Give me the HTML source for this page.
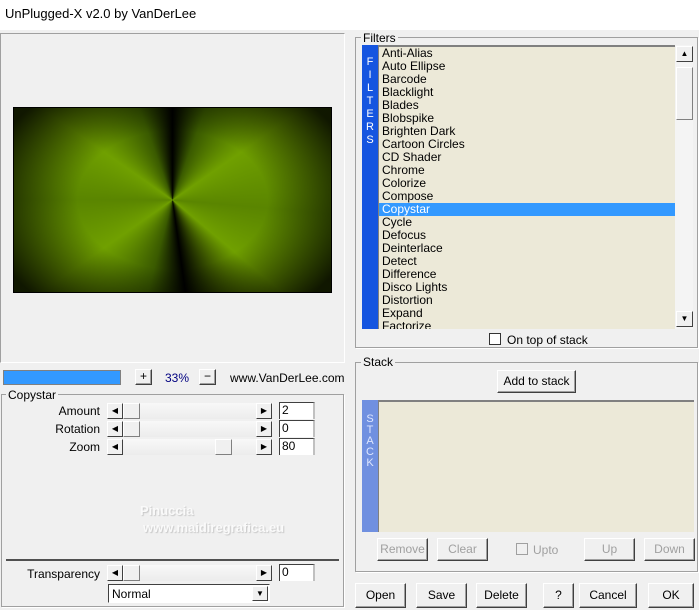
<!DOCTYPE html>
<html><head><style>
*{box-sizing:border-box;margin:0;padding:0}
body{width:699px;height:610px;background:#f0f0f0;font-family:"Liberation Sans",sans-serif;font-size:11px;color:#000;position:relative;overflow:hidden}
.a{position:absolute}
.btn{position:absolute;background:#f0f0f0;border:1px solid;border-color:#fff #404040 #404040 #fff;box-shadow:inset -1px -1px 0 #a0a0a0;text-align:center;font-size:12px}
.dis{color:#a0a0a0}
.grp{position:absolute;border:1px solid #a0a0a0;box-shadow:1px 1px 0 #fff}
.lbl{position:absolute;background:#f0f0f0;padding:0 2px;font-size:12px}
.item{height:13px;line-height:13px;padding-left:3px;font-size:12px}
.sb{position:absolute;height:16px;background:linear-gradient(#f8f8f8,#ececec)}
.arr{position:absolute;width:16px;height:16px;background:#f0f0f0;border:1px solid;border-color:#fff #404040 #404040 #fff;font-size:8px;text-align:center;line-height:14px}
.thumb{position:absolute;width:17px;height:16px;background:#f0f0f0;border:1px solid;border-color:#fff #808080 #808080 #fff}
.ed{position:absolute;width:36px;height:17px;background:#fff;border-left:1px solid #404040;border-top:1px solid #404040;border-right:2px solid #c0c0c0;font-size:12px;padding-left:2px;line-height:15px}
.rl{position:absolute;width:95px;text-align:right;font-size:12px}
</style></head><body>
<div class="a" style="left:0;top:0;width:699px;height:30px;background:#fff"></div>
<div class="a" style="left:5px;top:6px;font-size:13px">UnPlugged-X v2.0 by VanDerLee</div>

<div class="a" style="left:0;top:33px;width:345px;height:330px;border:1px solid #a0a0a0;border-right-color:#fff;border-bottom-color:#fff"></div>
<div class="a" style="left:13px;top:107px;width:319px;height:186px;border:1px solid #000;overflow:hidden;background:conic-gradient(from 0deg at 50% 50%,#000 0deg,#3a5a00 20deg,#70a000 55deg,#5a8500 95deg,#70a000 130deg,#000 172deg,#3a5a00 195deg,#70a000 235deg,#5a8500 270deg,#70a000 305deg,#3a5a00 340deg,#000 360deg)">
<div class="a" style="left:0;top:0;width:100%;height:100%;background:radial-gradient(ellipse 60% 75% at 50% 50%,rgba(0,0,0,0) 50%,rgba(0,0,0,.85) 100%)"></div></div>

<div class="a" style="left:3px;top:370px;width:118px;height:15px;background:#3399ff;border:1px solid #808080"></div>
<div class="btn" style="left:135px;top:369px;width:17px;height:16px;line-height:13px">+</div>
<div class="a" style="left:165px;top:371px;font-size:12px;color:#000080">33%</div>
<div class="btn" style="left:199px;top:369px;width:17px;height:16px;line-height:13px">−</div>
<div class="a" style="left:230px;top:371px;font-size:12px">www.VanDerLee.com</div>

<div class="grp" style="left:1px;top:394px;width:343px;height:213px"></div>
<div class="lbl" style="left:6px;top:388px">Copystar</div>

<div class="rl" style="left:5px;top:404px">Amount</div>
<div class="sb" style="left:107px;top:403px;width:166px"></div><div class="arr" style="left:107px;top:403px">◀</div><div class="thumb" style="left:123px;top:403px"></div><div class="arr" style="left:256px;top:403px">▶</div><div class="ed" style="left:279px;top:402px">2</div>
<div class="rl" style="left:5px;top:422px">Rotation</div>
<div class="sb" style="left:107px;top:421px;width:166px"></div><div class="arr" style="left:107px;top:421px">◀</div><div class="thumb" style="left:123px;top:421px"></div><div class="arr" style="left:256px;top:421px">▶</div><div class="ed" style="left:279px;top:420px">0</div>
<div class="rl" style="left:5px;top:440px">Zoom</div>
<div class="sb" style="left:107px;top:439px;width:166px"></div><div class="arr" style="left:107px;top:439px">◀</div><div class="thumb" style="left:215px;top:439px"></div><div class="arr" style="left:256px;top:439px">▶</div><div class="ed" style="left:279px;top:438px">80</div>

<div class="a" style="left:140px;top:503px;font-size:13px;font-weight:bold;color:#fafafa;text-shadow:1px 1px 1px #c8c8c8">Pinuccia</div>
<div class="a" style="left:143px;top:520px;font-size:13px;font-weight:bold;color:#fafafa;text-shadow:1px 1px 1px #c8c8c8">www.maidiregrafica.eu</div>

<div class="a" style="left:6px;top:559px;width:333px;height:2px;background:#505050"></div>
<div class="rl" style="left:5px;top:567px">Transparency</div>
<div class="sb" style="left:107px;top:565px;width:166px"></div><div class="arr" style="left:107px;top:565px">◀</div><div class="thumb" style="left:123px;top:565px"></div><div class="arr" style="left:256px;top:565px">▶</div><div class="ed" style="left:279px;top:564px">0</div>
<div class="a" style="left:108px;top:584px;width:162px;height:19px;background:#fff;border:1px solid;border-color:#404040 #fff #fff #404040;font-size:12px;padding:2px 3px">Normal</div>
<div class="arr" style="left:252px;top:586px;height:15px">▼</div>

<!-- right -->
<div class="grp" style="left:355px;top:37px;width:343px;height:311px"></div>
<div class="lbl" style="left:361px;top:31px">Filters</div>
<div class="a" style="left:362px;top:45px;width:16px;height:284px;background:#1555e0;color:#fff;font-size:11px;text-align:center;line-height:13px;padding-top:11px">F<br>I<br>L<br>T<br>E<br>R<br>S</div>
<div class="a" style="left:378px;top:45px;width:297px;height:284px;background:#ece9d8;border-top:2px solid #808080;border-left:1px solid #808080;overflow:hidden">
<div class="item">Anti-Alias</div><div class="item">Auto Ellipse</div><div class="item">Barcode</div><div class="item">Blacklight</div><div class="item">Blades</div><div class="item">Blobspike</div><div class="item">Brighten Dark</div><div class="item">Cartoon Circles</div><div class="item">CD Shader</div><div class="item">Chrome</div><div class="item">Colorize</div><div class="item">Compose</div><div class="item" style="background:#3399ff;color:#fff">Copystar</div><div class="item">Cycle</div><div class="item">Defocus</div><div class="item">Deinterlace</div><div class="item">Detect</div><div class="item">Difference</div><div class="item">Disco Lights</div><div class="item">Distortion</div><div class="item">Expand</div><div class="item">Factorize</div></div>
<div class="a" style="left:675px;top:45px;width:18px;height:284px;background:#f4f4f4"></div>
<div class="arr" style="left:676px;top:46px;width:17px">▲</div>
<div class="thumb" style="left:676px;top:67px;width:17px;height:53px"></div>
<div class="arr" style="left:676px;top:311px;width:17px">▼</div>

<div class="a" style="left:489px;top:333px;width:12px;height:12px;background:#fff;border:1px solid #333"></div>
<div class="a" style="left:507px;top:333px;font-size:12px">On top of stack</div>

<div class="grp" style="left:355px;top:362px;width:343px;height:210px"></div>
<div class="lbl" style="left:361px;top:355px">Stack</div>
<div class="btn" style="left:497px;top:370px;width:79px;height:23px;line-height:20px">Add to stack</div>
<div class="a" style="left:362px;top:400px;width:16px;height:132px;background:#7090e0;color:#dde6ff;font-size:11px;text-align:center;line-height:11px;padding-top:14px">S<br>T<br>A<br>C<br>K</div>
<div class="a" style="left:378px;top:400px;width:316px;height:132px;background:#ece9d8;border-top:2px solid #808080;border-left:1px solid #808080"></div>
<div class="btn dis" style="left:377px;top:538px;width:51px;height:23px;line-height:20px">Remove</div>
<div class="btn dis" style="left:437px;top:538px;width:51px;height:23px;line-height:20px">Clear</div>
<div class="a" style="left:516px;top:543px;width:12px;height:12px;border:1px solid #a0a0a0"></div>
<div class="a dis" style="left:533px;top:543px;font-size:12px">Upto</div>
<div class="btn dis" style="left:584px;top:538px;width:51px;height:23px;line-height:20px">Up</div>
<div class="btn dis" style="left:644px;top:538px;width:51px;height:23px;line-height:20px">Down</div>

<div class="btn" style="left:355px;top:583px;width:51px;height:25px;line-height:22px">Open</div>
<div class="btn" style="left:416px;top:583px;width:51px;height:25px;line-height:22px">Save</div>
<div class="btn" style="left:476px;top:583px;width:51px;height:25px;line-height:22px">Delete</div>
<div class="btn" style="left:543px;top:583px;width:31px;height:25px;line-height:22px">?</div>
<div class="btn" style="left:579px;top:583px;width:58px;height:25px;line-height:22px">Cancel</div>
<div class="btn" style="left:648px;top:583px;width:46px;height:25px;line-height:22px">OK</div>
</body></html>
